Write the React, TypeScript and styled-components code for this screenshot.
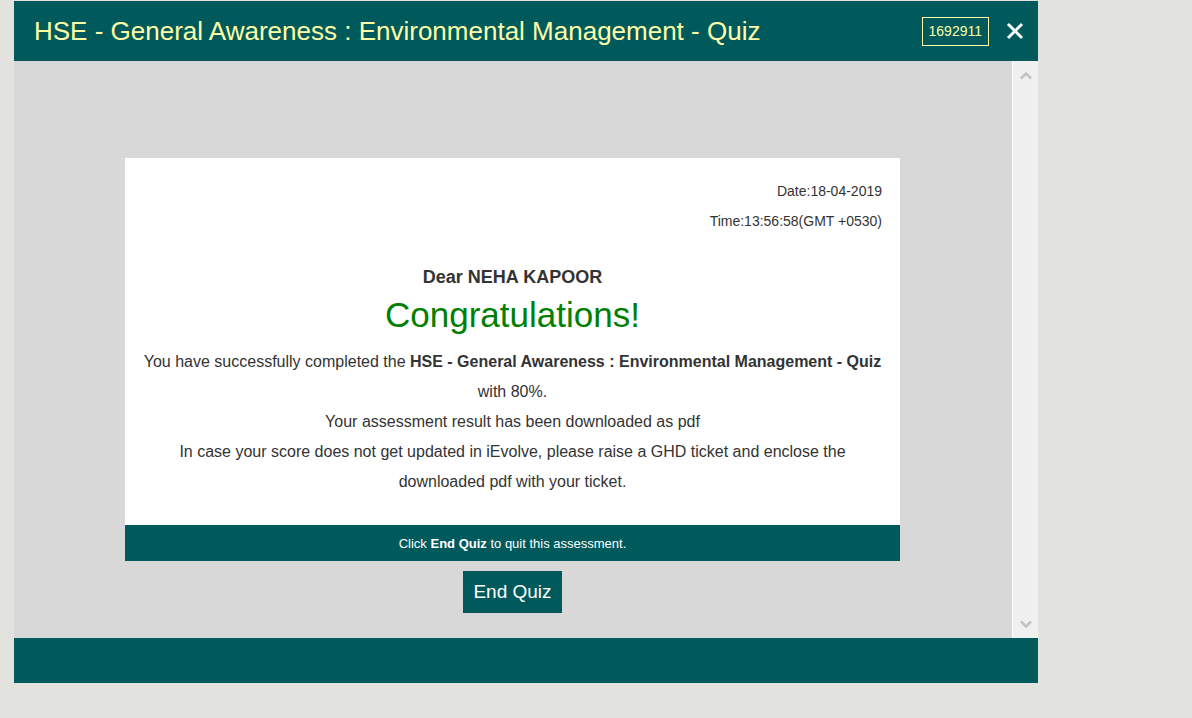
import React from 'react';
import styled, { createGlobalStyle } from 'styled-components';

const GlobalStyle = createGlobalStyle`
    html, body {
        margin: 0;
        padding: 0;
        background: #e2e2de;
        font-family: "Liberation Sans", Arial, sans-serif;
    }
`;

const Page = styled.div`
    width: 1192px;
    height: 718px;
    padding: 1px 0 0 14px;
    box-sizing: border-box;
`;

const Modal = styled.div`
    width: 1024px;
    display: flex;
    flex-direction: column;
`;

const Header = styled.div`
    height: 60px;
    background: #005a5c;
    display: flex;
    align-items: center;
    padding: 0 14px 0 20px;
`;

const Title = styled.h1`
    flex: 1;
    margin: 0;
    font-size: 26px;
    font-weight: normal;
    color: #ffffa8;
`;

const Badge = styled.span`
    border: 1px solid #ffffa8;
    color: #ffffa8;
    font-size: 14px;
    padding: 5px 6px;
    line-height: 17px;
`;

const CloseButton = styled.button`
    background: none;
    border: none;
    padding: 0;
    margin-left: 17px;
    width: 18px;
    height: 18px;
    cursor: pointer;
    display: flex;
`;

const Body = styled.div`
    height: 577px;
    background: #d8d8d8;
    display: flex;
`;

const Content = styled.div`
    flex: 1;
    display: flex;
    flex-direction: column;
    padding: 97px 0 0 111px;
`;

const Card = styled.div`
    width: 775px;
    background: #fff;
`;

const CardBody = styled.div`
    padding: 18px 18px 28px;
    color: #333;
`;

const Stamp = styled.div`
    text-align: right;
    font-size: 14px;
    line-height: 30px;
`;

const Greeting = styled.div`
    text-align: center;
    font-size: 18px;
    font-weight: bold;
    margin-top: 31px;
    line-height: 20px;
`;

const Congrats = styled.div`
    text-align: center;
    color: #008000;
    font-size: 35px;
    line-height: 40px;
    margin-top: 8px;
`;

const Message = styled.p`
    margin: 0;
    margin-top: 12px;
    text-align: center;
    font-size: 16px;
    line-height: 30px;
`;

const CardFooter = styled.div`
    height: 36px;
    background: #005a5c;
    color: #fff;
    font-size: 13px;
    display: flex;
    align-items: center;
    justify-content: center;
`;

const EndButton = styled.button`
    align-self: flex-start;
    margin: 10px 0 0 338px;
    width: 99px;
    height: 42px;
    background: #005a5c;
    color: #fff;
    border: none;
    font-family: "Liberation Sans", Arial, sans-serif;
    font-size: 19px;
    cursor: pointer;
`;

const Scrollbar = styled.div`
    width: 25px;
    background: #f0f0f0;
    border-left: 1px solid #fff;
    display: flex;
    flex-direction: column;
    justify-content: space-between;
    align-items: center;
    padding: 11px 0 10px;
`;

const Footer = styled.div`
    height: 45px;
    background: #005a5c;
`;

const Arrow: React.FC<{ down?: boolean }> = ({ down }) => (
    <svg width="12" height="8" viewBox="0 0 12 8">
        <path
            d={down ? 'M1 1.5 L6 6.5 L11 1.5' : 'M1 6.5 L6 1.5 L11 6.5'}
            fill="none"
            stroke="#c2c2c2"
            strokeWidth="2.5"
        />
    </svg>
);

const App: React.FC = () => {
    return (
        <Page>
            <GlobalStyle />
            <Modal>
                <Header>
                    <Title>HSE - General Awareness : Environmental Management - Quiz</Title>
                    <Badge>1692911</Badge>
                    <CloseButton aria-label="Close">
                        <svg width="18" height="18" viewBox="0 0 18 18">
                            <path d="M2 2 L16 16 M16 2 L2 16" stroke="#fff" strokeWidth="3" />
                        </svg>
                    </CloseButton>
                </Header>
                <Body>
                    <Content>
                        <Card>
                            <CardBody>
                                <Stamp>Date:18-04-2019</Stamp>
                                <Stamp>Time:13:56:58(GMT +0530)</Stamp>
                                <Greeting>Dear NEHA KAPOOR</Greeting>
                                <Congrats>Congratulations!</Congrats>
                                <Message>
                                    You have successfully completed the <b>HSE - General Awareness : Environmental Management - Quiz</b> with 80%.
                                    <br />
                                    Your assessment result has been downloaded as pdf
                                    <br />
                                    In case your score does not get updated in iEvolve, please raise a GHD ticket and enclose the downloaded pdf with your ticket.
                                </Message>
                            </CardBody>
                            <CardFooter>
                                <span>Click <b>End Quiz</b> to quit this assessment.</span>
                            </CardFooter>
                        </Card>
                        <EndButton>End Quiz</EndButton>
                    </Content>
                    <Scrollbar>
                        <Arrow />
                        <Arrow down />
                    </Scrollbar>
                </Body>
                <Footer />
            </Modal>
        </Page>
    );
};

export default App;
